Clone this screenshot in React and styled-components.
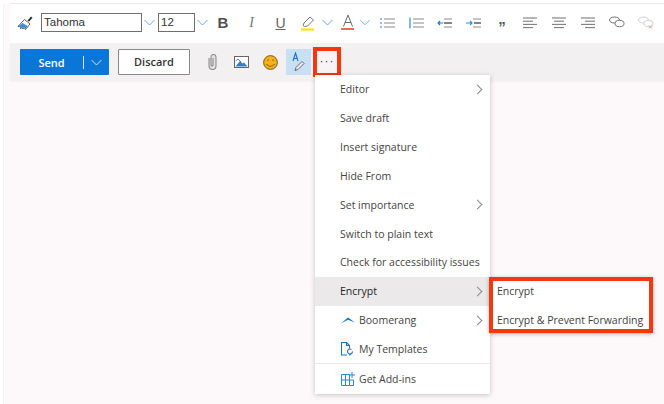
import React from 'react';
import styled, { createGlobalStyle } from 'styled-components';

const GlobalStyle = createGlobalStyle`
  html, body {
    margin: 0;
    padding: 0;
    background: #fff;
  }
  body {
    font-family: "Open Sans", "Noto Sans", sans-serif;
    color: #323130;
  }
`;

const Chevron = ({ color = '#6aa5dc' }) => (
  <svg width="11" height="11" viewBox="0 0 11 11" fill="none" stroke={color} strokeWidth="1">
    <path d="M.5 3 5.500 8 10.500 3" />
  </svg>
);

const AlignIcon = ({ widths }) => (
  <svg width="15" height="12" viewBox="0 0 15 12" stroke="#7d7d7d" strokeWidth="1.1">
    {widths.map(([x, w], i) => (
      <path key={i} d={`M${x} ${1 + i * 3.2}h${w}`} />
    ))}
  </svg>
);

const ListIcon = ({ numbered }) => (
  <svg width="15" height="12" viewBox="0 0 15 12" fill="none" strokeWidth="1.1">
    <path d="M4 2h11M4 6h11M4 10h11" stroke="#8a8a8a" />
    <path d={numbered ? 'M1 .5v11' : 'M1 1v2M1 5v2M1 9v2'} stroke="#4d9ae0" strokeWidth={numbered ? 1.4 : 1.2} />
  </svg>
);

const IndentIcon = () => (
  <svg width="15" height="10" viewBox="0 0 15 10" fill="none">
    <path d="M7 1h8M7 9h8" stroke="#8a8a8a" strokeWidth="1" />
    <path d="M7 5h8" stroke="#333" strokeWidth="1.2" />
    <path d="M1 5h5M3 3 1 5l2 2" stroke="#1e78d2" strokeWidth="1.1" />
  </svg>
);

const OutdentIcon = () => (
  <svg width="15" height="10" viewBox="0 0 15 10" fill="none">
    <path d="M7 1h8M7 9h8" stroke="#8a8a8a" strokeWidth="1" />
    <path d="M8 5h7" stroke="#333" strokeWidth="1.2" />
    <path d="M0 5h6M4 3l2 2-2 2" stroke="#2b8be0" strokeWidth="1.1" />
  </svg>
);

const LinkIcon = ({ off }) => (
  <svg width="16" height="13" viewBox="0 0 16 13" fill="none" stroke={off ? '#cfcfcf' : '#707070'} strokeWidth="1">
    <ellipse cx="5.500" cy="4" rx="5" ry="3" />
    <ellipse cx="10.500" cy="7.500" rx="4.500" ry="3.200" fill="#fff" />
    {off && <path d="M11 9.500l3 3m0-3-3 3" stroke="#e39a88" />}
  </svg>
);

const leftAlign = [[0, 14], [0, 10], [0, 14], [0, 10]];
const centerAlign = [[0, 14], [2, 10], [0, 14], [2, 10]];
const rightAlign = [[0, 14], [4, 10], [0, 14], [4, 10]];

function App() {
  return (
    <>
      <GlobalStyle />
      <Page>
        <TopRule />
        <Compose>
          <FormatBar>
            <Tool $w={20}>
              <svg width="17" height="16" viewBox="0 0 17 16">
                <path d="M10.500 5.500 14 1.500l1.500 1.300-3.500 4z" fill="#333" />
                <path d="M7.500 4.500 13 9l-4.500 5.500-1.500-2-1 1.500-1-1.500-1.500 1L4 11l-3 .5z" fill="#fff" stroke="#333" strokeWidth=".8" />
                <path d="M2 11l3.500-3 5 3-2 3-1.500-2-1 1.500-1-1.500-1.500 1z" fill="#3d8fdc" />
              </svg>
            </Tool>
            <FontBox $w={101} $ml={6}>Tahoma</FontBox>
            <Tool $w={14}><Chevron /></Tool>
            <FontBox $w={37} $ml={2}>12</FontBox>
            <Tool $w={14}><Chevron /></Tool>
            <Glyph $w={28} $weight={700} $size={15} $color="#505050">B</Glyph>
            <Glyph $w={29} $italic $serif $size={14} $color="#777">I</Glyph>
            <Glyph $w={29} $size={14} $color="#666" $underline>U</Glyph>
            <Tool $w={26}>
              <svg width="15" height="16" viewBox="0 0 15 16">
                <path d="M2 10.500 3 8l6-6 3.500 3-6 6-3 .5z" fill="#fff" stroke="#777" strokeWidth="1" />
                <path d="M0 14.500h13" stroke="#ffe600" strokeWidth="2.200" />
              </svg>
            </Tool>
            <Tool $w={12}><Chevron /></Tool>
            <Tool $w={25} $ml={2}>
              <svg width="14" height="17" viewBox="0 0 14 17" fill="none">
                <path d="M2.500 12.500 7 1l4.500 11.500M4 8.500h6" stroke="#6a6a6a" strokeWidth="1" />
                <path d="M0 15h13" stroke="#ec5a44" strokeWidth="1.800" />
              </svg>
            </Tool>
            <Tool $w={10}><Chevron /></Tool>
            <Tool $w={28.7} $ml={3}><ListIcon /></Tool>
            <Tool $w={28.7}><ListIcon numbered /></Tool>
            <Tool $w={28.7}><IndentIcon /></Tool>
            <Tool $w={28.7}><OutdentIcon /></Tool>
            <Quote>”</Quote>
            <Tool $w={28.7}><AlignIcon widths={leftAlign} /></Tool>
            <Tool $w={28.7}><AlignIcon widths={centerAlign} /></Tool>
            <Tool $w={28.7}><AlignIcon widths={rightAlign} /></Tool>
            <Tool $w={28.7}><LinkIcon /></Tool>
            <Tool $w={28.7}><LinkIcon off /></Tool>
          </FormatBar>
          <ActionBar>
            <SendButton>
              <SendLabel>Send</SendLabel>
              <SendSplit><Chevron color="#d5e6fa" /></SendSplit>
            </SendButton>
            <DiscardButton>Discard</DiscardButton>
            <Tool $w={29} $ml={8}>
              <svg width="9" height="16" viewBox="0 0 9 16" fill="#e4e2e2" stroke="#8c8c8c" strokeWidth="1.100">
                <path d="M1 4v8a3.500 3.500 0 0 0 7 0V3a2.500 2.500 0 0 0-5 0v8a1 1 0 0 0 2 0V4" />
              </svg>
            </Tool>
            <Tool $w={28}>
              <svg width="15" height="12" viewBox="0 0 15 12">
                <rect x=".5" y=".5" width="14" height="11" fill="#fff" stroke="#666" />
                <path d="M1.500 10.500 6 5l2.500 2.500L10 6.500l3.500 4z" fill="#2f7fd0" />
                <path d="M1.500 5 4 3l3 3" fill="none" stroke="#555" strokeWidth=".8" />
              </svg>
            </Tool>
            <Tool $w={30}>
              <svg width="15" height="15" viewBox="0 0 15 15" fill="none" stroke="#6b5200" strokeWidth=".9">
                <circle cx="7.500" cy="7.500" r="6.900" fill="#f4b01e" />
                <path d="M5 4.500v1.500M10 4.500v1.500M3.500 9c2 3 6 3 8 0" />
              </svg>
            </Tool>
            <ActiveTool>
              <svg width="13" height="20" viewBox="0 0 13 20" fill="none">
                <path d="M1 9 3.500 1 6 9M1.800 6.500h3.400" stroke="#1673d4" strokeWidth="1.100" />
                <path d="M3 18.500 4 15.500l6-6 2 2-6 6z" fill="#f0eeee" stroke="#666" strokeWidth="1" />
              </svg>
            </ActiveTool>
            <MoreButton>···</MoreButton>
          </ActionBar>
        </Compose>
        <Menu>
          <MenuItem>Editor<Arrow /></MenuItem>
          <MenuItem>Save draft</MenuItem>
          <MenuItem>Insert signature</MenuItem>
          <MenuItem>Hide From</MenuItem>
          <MenuItem>Set importance<Arrow /></MenuItem>
          <MenuItem>Switch to plain text</MenuItem>
          <MenuItem>Check for accessibility issues</MenuItem>
          <MenuItem $active>Encrypt<Arrow /></MenuItem>
          <MenuItem $icon>
            <MenuIcon>
              <svg width="14" height="7" viewBox="0 0 14 7">
                <path d="M0 6.500 7 .5l7 5-7-2.700z" fill="#1673cc" />
              </svg>
            </MenuIcon>
            Boomerang<Arrow />
          </MenuItem>
          <MenuItem $icon>
            <MenuIcon>
              <svg width="12" height="14" viewBox="0 0 12 14" fill="none" stroke="#1673cc" strokeWidth="1.100">
                <path d="M6 13H.5V.5h5l3 3v3M5.500.5v3h3" />
                <path d="M11.500 9.500a2.500 2.500 0 1 1-1-2M9 13.500l-.500-1.500 1.500-.5" />
              </svg>
            </MenuIcon>
            My Templates
          </MenuItem>
          <MenuDivider />
          <MenuItem $icon>
            <MenuIcon>
              <svg width="14" height="14" viewBox="0 0 14 14" fill="none" stroke="#2b86dc" strokeWidth="1">
                <path d="M.5 2.500h8v11h-8zM.5 8h12v5.500h-4M4.500 2.500v11M11 0v6M8 3h6" />
              </svg>
            </MenuIcon>
            Get Add-ins
          </MenuItem>
        </Menu>
        <SubMenu>
          <SubItem>Encrypt</SubItem>
          <SubItem>Encrypt &amp; Prevent Forwarding</SubItem>
        </SubMenu>
      </Page>
    </>
  );
}

export default App;

const Page = styled.div`
  position: relative;
  width: 664px;
  height: 404px;
  overflow: hidden;
  display: flex;
  flex-direction: column;
  background: #fff;
`;
const TopRule = styled.div`
  height: 4px;
  flex: none;
  box-sizing: border-box;
  margin-left: 10px;
  border-bottom: 1px solid #ebe9ea;
`;
const Compose = styled.div`
  flex: 1;
  margin-left: 3px;
  padding-left: 6px;
  background: #fdf9fa;
  border-left: 1px solid #f4f1f2;
  box-sizing: border-box;
`;
const FormatBar = styled.div`
  height: 39px;
  box-sizing: border-box;
  padding: 0 0 2px 5px;
  display: flex;
  align-items: center;
  background: #fff;
`;
const Tool = styled.div`
  width: ${(p) => p.$w}px;
  margin-left: ${(p) => p.$ml || 0}px;
  flex: none;
  display: flex;
  align-items: center;
  justify-content: center;
`;
const Glyph = styled(Tool)`
  font-family: ${(p) => (p.$serif ? '"Liberation Serif"' : '"Liberation Sans"')}, sans-serif;
  font-size: ${(p) => p.$size}px;
  font-weight: ${(p) => p.$weight || 400};
  font-style: ${(p) => (p.$italic ? 'italic' : 'normal')};
  text-decoration: ${(p) => (p.$underline ? 'underline' : 'none')};
  color: ${(p) => p.$color};
`;
const Quote = styled.div`
  width: 28.7px;
  height: 14px;
  flex: none;
  text-align: center;
  font-family: "Liberation Sans", sans-serif;
  font-size: 15px;
  font-weight: 700;
  line-height: 21px;
  color: #555;
`;
const FontBox = styled.div`
  width: ${(p) => p.$w}px;
  margin-left: ${(p) => p.$ml || 0}px;
  height: 19px;
  flex: none;
  box-sizing: border-box;
  border: 1px solid #6f6f6f;
  padding-left: 2px;
  font-family: "Liberation Sans", sans-serif;
  font-size: 11.5px;
  line-height: 17px;
  color: #333;
`;
const ActionBar = styled.div`
  height: 38px;
  box-sizing: border-box;
  padding-left: 10px;
  display: flex;
  align-items: center;
  background: #f3f0f1;
  box-shadow: 0 1px 3px rgba(0, 0, 0, 0.03);
`;
const SendButton = styled.div`
  width: 89px;
  height: 26px;
  flex: none;
  display: flex;
  align-items: center;
  background: #0a76d8;
  border-radius: 1px;
  color: #fff;
  font-size: 11px;
  font-weight: 600;
`;
const SendLabel = styled.div`
  width: 63px;
  text-align: center;
`;
const SendSplit = styled.div`
  flex: 1;
  height: 13px;
  border-left: 1px solid #d5e6fa;
  display: flex;
  align-items: center;
  justify-content: center;
`;
const DiscardButton = styled.div`
  width: 72px;
  height: 26px;
  margin-left: 9px;
  flex: none;
  box-sizing: border-box;
  background: #fff;
  border: 1px solid #8a8886;
  border-radius: 1px;
  text-align: center;
  line-height: 24px;
  font-size: 11px;
  font-weight: 600;
  color: #333;
`;
const ActiveTool = styled.div`
  width: 25px;
  height: 26px;
  margin-left: 1px;
  flex: none;
  display: flex;
  align-items: center;
  justify-content: center;
  background: #c7e0f4;
`;
const MoreButton = styled.div`
  width: 28px;
  height: 30px;
  margin-left: 2px;
  flex: none;
  box-sizing: border-box;
  border: 4px solid #f5360f;
  text-align: center;
  font-family: "Liberation Sans", sans-serif;
  font-size: 12px;
  letter-spacing: 1px;
  line-height: 21px;
  color: #444;
  background: #f6f4f5;
`;
const Menu = styled.div`
  position: absolute;
  left: 315px;
  top: 75px;
  width: 175px;
  height: 319px;
  background: #fff;
  box-shadow: 0 1px 5px rgba(0, 0, 0, 0.22);
  font-size: 10.5px;
`;
const MenuItem = styled.div`
  position: relative;
  height: 28.85px;
  box-sizing: border-box;
  padding-left: ${(p) => (p.$icon ? 44 : 25)}px;
  display: flex;
  align-items: center;
  background: ${(p) => (p.$active ? '#ebe9ea' : 'transparent')};
  color: ${(p) => (p.$active ? '#201f1e' : '#454443')};
`;
const MenuIcon = styled.span`
  position: absolute;
  left: 26px;
  top: 0;
  bottom: 0;
  display: flex;
  align-items: center;
`;
const Arrow = styled.span`
  position: absolute;
  right: 9px;
  top: 11px;
  width: 6px;
  height: 6px;
  border-top: 1px solid #8a8886;
  border-right: 1px solid #8a8886;
  transform: rotate(45deg);
`;
const MenuDivider = styled.div`
  height: 1px;
  background: #e8e6e7;
`;
const SubMenu = styled.div`
  position: absolute;
  left: 489px;
  top: 277px;
  width: 164px;
  height: 56px;
  box-sizing: border-box;
  padding-left: 4px;
  border: 4px solid #f5360f;
  background: #fff;
  box-shadow: 0 1px 4px rgba(0, 0, 0, 0.3);
  font-size: 10.5px;
  display: flex;
  flex-direction: column;
  gap: 10px;
`;
const SubItem = styled.div`
  height: 19px;
  display: flex;
  align-items: center;
  white-space: nowrap;
  color: #3f3e3d;
`;
